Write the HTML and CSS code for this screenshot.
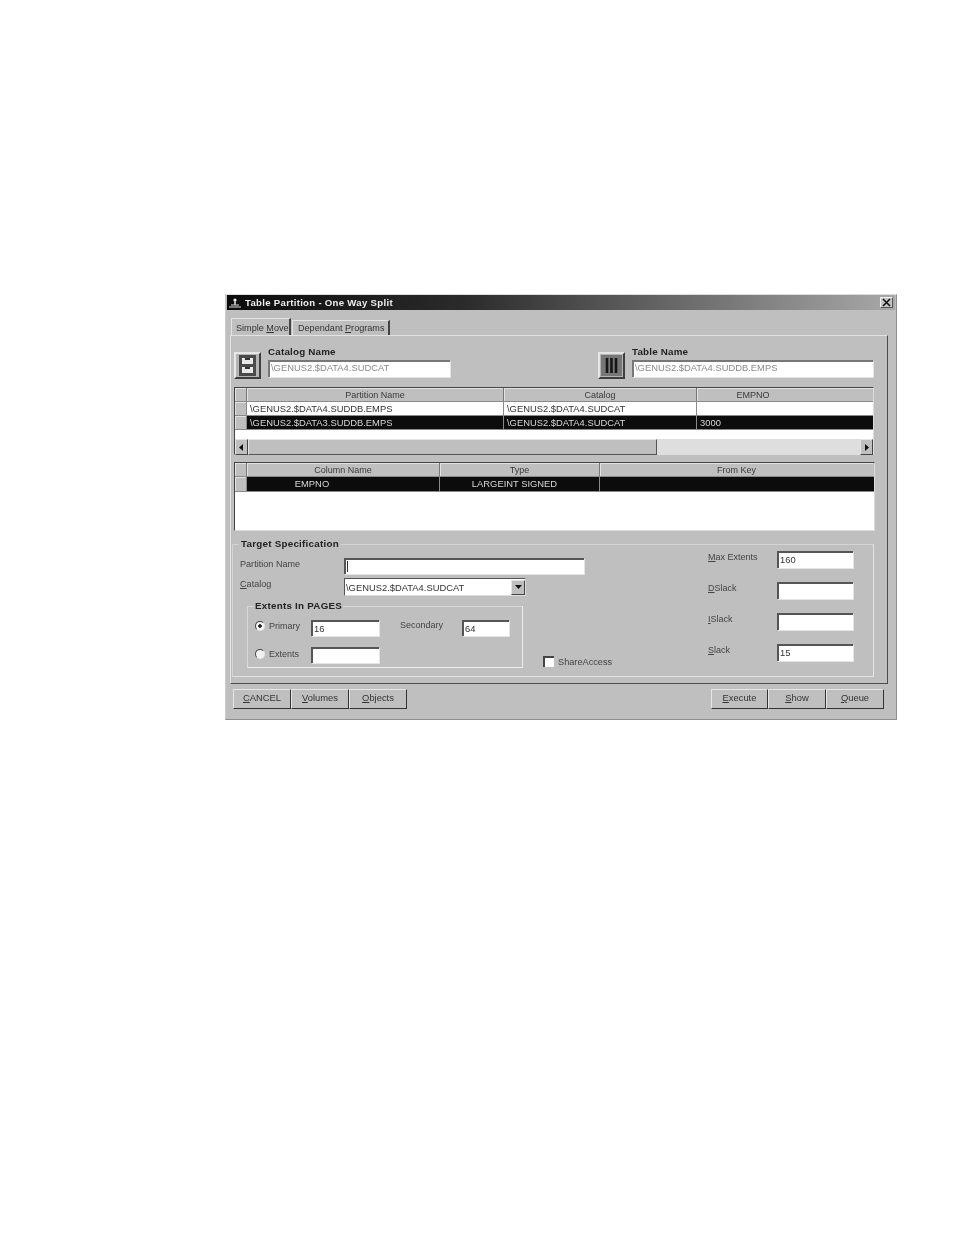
FILE: index.html
```html
<!DOCTYPE html>
<html lang="en">
<head>
<meta charset="utf-8">
<title>Table Partition - One Way Split</title>
<link rel="stylesheet" href="styles.css">
</head>
<body>
<div class="window">
  <div class="titlebar">
    <svg class="appicon" width="14" height="11" viewBox="0 0 14 11"><path d="M1 10h12M3 8h8M6 6h2M7 2v6" stroke="#ddd" stroke-width="1.2" fill="none"/><circle cx="7" cy="3" r="1.6" fill="#eee"/></svg>
    <span class="title">Table Partition - One Way Split</span>
    <span class="close"><svg width="9" height="9" viewBox="0 0 9 9"><path d="M1 1l7 7M8 1l-7 7" stroke="#111" stroke-width="1.6"/></svg></span>
  </div>
  <div class="tabs">
    <span class="tab active">Simple <u>M</u>ove</span>
    <span class="tab">Dependant <u>P</u>rograms</span>
  </div>
  <div class="panel">
    <div class="names">
      <div class="name-left">
        <div class="iconbtn">
          <svg width="19" height="23" viewBox="0 0 19 23"><rect x="1" y="1" width="17" height="21" fill="#4a4a4a"/><rect x="4" y="4" width="11" height="6" fill="#e8e8e8"/><rect x="4" y="13" width="11" height="6" fill="#e8e8e8"/><rect x="7" y="4" width="5" height="2" fill="#333"/><rect x="7" y="13" width="5" height="2" fill="#333"/></svg>
        </div>
        <div class="namefield wide-a">
          <div class="boldlabel">Catalog Name</div>
          <div class="input ro">\GENUS2.$DATA4.SUDCAT</div>
        </div>
      </div>
      <div class="name-right">
        <div class="iconbtn">
          <svg width="21" height="21" viewBox="0 0 21 21"><rect width="21" height="21" fill="#777"/><path d="M6 3v15M10.500 3v15M15 3v15" stroke="#161616" stroke-width="2.6"/></svg>
        </div>
        <div class="namefield wide-b">
          <div class="boldlabel">Table Name</div>
          <div class="input ro">\GENUS2.$DATA4.SUDDB.EMPS</div>
        </div>
      </div>
    </div>

    <div class="grid grid-one">
      <div class="row cols-one head">
        <span class="ind"></span><span class="c">Partition Name</span><span class="c">Catalog</span><span class="c offset-key">EMPNO</span>
      </div>
      <div class="row cols-one plain">
        <span class="ind"></span><span class="l">\GENUS2.$DATA4.SUDDB.EMPS</span><span class="l">\GENUS2.$DATA4.SUDCAT</span><span class="l"></span>
      </div>
      <div class="row cols-one sel">
        <span class="ind"></span><span class="l">\GENUS2.$DATA3.SUDDB.EMPS</span><span class="l">\GENUS2.$DATA4.SUDCAT</span><span class="l">3000</span>
      </div>
      <div class="blank-one"></div>
      <div class="scrollbar">
        <span class="arrow"><svg width="5" height="7" viewBox="0 0 5 7"><path d="M4 0v7L0 3.500z" fill="#111"/></svg></span>
        <span class="thumb"></span>
        <span class="track"></span>
        <span class="arrow"><svg width="5" height="7" viewBox="0 0 5 7"><path d="M1 0v7l4-3.500z" fill="#111"/></svg></span>
      </div>
    </div>

    <div class="grid grid-two">
      <div class="row cols-two head">
        <span class="ind"></span><span class="c">Column Name</span><span class="c">Type</span><span class="c">From Key</span>
      </div>
      <div class="row cols-two sel tall">
        <span class="ind"></span><span class="c offset-name">EMPNO</span><span class="c offset-type">LARGEINT SIGNED</span><span class="c"></span>
      </div>
    </div>

    <fieldset class="target">
      <legend>Target Specification</legend>
      <div class="target-body">
        <div class="target-left">
          <div class="field-row first">
            <label class="flabel">Partition Name</label>
            <div class="input partition"><i class="caret"></i></div>
          </div>
          <div class="field-row second">
            <label class="flabel"><u>C</u>atalog</label>
            <div class="select">
              <span class="select-text">\GENUS2.$DATA4.SUDCAT</span>
              <span class="drop"><svg width="7" height="4" viewBox="0 0 7 4"><path d="M0 0h7L3.500 4z" fill="#111"/></svg></span>
            </div>
          </div>
          <div class="ext-wrap">
            <fieldset class="extents">
              <legend>Extents In PAGES</legend>
              <div class="ext-row one">
                <span class="radio on"></span><span class="rlabel">Primary</span>
                <div class="input ext">16</div>
                <span class="seclabel">Secondary</span>
                <div class="input sec">64</div>
              </div>
              <div class="ext-row two">
                <span class="radio"></span><span class="rlabel">Extents</span>
                <div class="input ext"></div>
              </div>
            </fieldset>
            <div class="share"><span class="check"></span><span>ShareAccess</span></div>
          </div>
        </div>
        <div class="target-right">
          <div class="rrow"><label><u>M</u>ax Extents</label><div class="input rinput">160</div></div>
          <div class="rrow"><label><u>D</u>Slack</label><div class="input rinput"></div></div>
          <div class="rrow"><label><u>I</u>Slack</label><div class="input rinput"></div></div>
          <div class="rrow"><label><u>S</u>lack</label><div class="input rinput">15</div></div>
        </div>
      </div>
    </fieldset>
  </div>
  <div class="footer">
    <div class="btns">
      <span class="btn"><u>C</u>ANCEL</span><span class="btn"><u>V</u>olumes</span><span class="btn"><u>O</u>bjects</span>
    </div>
    <div class="btns">
      <span class="btn first-right"><u>E</u>xecute</span><span class="btn"><u>S</u>how</span><span class="btn"><u>Q</u>ueue</span>
    </div>
  </div>
</div>
</body>
</html>
```
FILE: styles.css
```css
* { box-sizing: border-box; }
html, body { margin: 0; background: #fff; }
body { padding: 294px 0 0 225px; height: 1235px; overflow: hidden; font-family: "Liberation Sans", Arial, sans-serif; font-size: 9.4px; color: #2a2a2a; }

.window { width: 672px; height: 426px; background: #bfbfbf; border: 1px solid #8e8e8e; border-top-color: #ddd; border-left-color: #ccc; display: flex; flex-direction: column; filter: blur(0.75px); }

.titlebar { height: 15px; margin: 0 1px; background: linear-gradient(90deg, #0c0c0c 0%, #2a2a2a 35%, #6e6e6e 70%, #a8a8a8 100%); display: flex; align-items: center; padding: 0 2px 0 1px; color: #eee; flex: none; }
.appicon { flex: none; margin-right: 3px; }
.title { font-weight: bold; font-size: 9.6px; letter-spacing: 0.3px; flex: 1; }
.close { width: 13px; height: 11px; background: #c4c4c4; border: 1px solid; border-color: #eee #555 #555 #eee; display: flex; align-items: center; justify-content: center; }

.tabs { height: 17px; margin: 8px 0 0 5px; display: flex; align-items: flex-end; flex: none; gap: 1px; }
.tab { height: 17px; padding: 4px 0 0 4px; border-right: 2px solid #444; border-top: 1px solid #e4e4e4; border-left: 1px solid #e4e4e4; white-space: nowrap; font-size: 9.1px; color: #333; }
.tab.active { width: 60px; }
.tab:not(.active) { width: 98px; height: 15px; padding-top: 2px; padding-left: 5px; }

.panel { width: 658px; height: 349px; margin-left: 4px; border: 1px solid; border-color: #e2e2e2 #4c4c4c #4c4c4c #e2e2e2; padding: 15px 0 0 3px; flex: none; }

.names { display: flex; height: 25px; }
.name-left { display: flex; width: 364px; }
.name-right { display: flex; }
.iconbtn { width: 27px; height: 27px; margin-top: 1px; background: #b4b4b4; border: 2px solid; border-color: #e6e6e6 #3e3e3e #3e3e3e #e6e6e6; display: flex; align-items: center; justify-content: center; flex: none; }
.namefield { margin-left: 7px; margin-top: -4px; }
.wide-a { width: 182px; }
.wide-b { width: 241px; }
.boldlabel { font-weight: bold; font-size: 9.8px; height: 13px; line-height: 10px; color: #222; letter-spacing: 0.2px; }
.input { background: #fff; border-top: 2px solid #555; border-left: 2px solid #555; height: 16px; padding-left: 1px; line-height: 14px; white-space: nowrap; color: #333; box-shadow: 1px 1px 0 #e4e4e4; }
.input.ro { height: 17px; line-height: 12px; color: #8b8b8b; border-color: #777; }

.grid { background: #fff; border: 1px solid; border-color: #444 #ddd #ddd #444; }
.grid-one { width: 640px; height: 68px; margin-top: 11px; }
.grid-two { width: 641px; height: 69px; margin-top: 7px; }
.row { display: grid; height: 14px; line-height: 13px; border-bottom: 1px solid #8a8a8a; }
.cols-one { grid-template-columns: 12px 257px 193px 176px; }
.cols-two { grid-template-columns: 12px 193px 160px 273px; }
.row > span { border-right: 1px solid #8a8a8a; overflow: hidden; white-space: nowrap; }
.row > span:last-child { border-right: 0; }
.ind { background: #bfbfbf; box-shadow: inset 1px 1px 0 #e2e2e2; }
.head { background: #bfbfbf; color: #3a3a3a; font-size: 9px; line-height: 15px; }
.head > span { border-right-color: #777; box-shadow: inset 1px 1px 0 #e2e2e2; }
.c { text-align: center; }
.l { padding-left: 3px; }
.offset-key { padding-right: 64px; }
.offset-name { padding-right: 62px; }
.offset-type { padding-right: 10px; }
.plain { background: #fff; color: #333; }
.sel { background: #0c0c0c; color: #d8d8d8; }
.tall { height: 15px; }
.blank-one { height: 9px; }
.scrollbar { height: 17px; display: flex; background: #bfbfbf; }
.arrow { width: 13px; height: 16px; background: #bfbfbf; border: 1px solid; border-color: #e4e4e4 #444 #444 #e4e4e4; display: flex; align-items: center; justify-content: center; flex: none; }
.thumb { width: 409px; background: #bfbfbf; border: 1px solid; border-color: #e4e4e4 #555 #555 #e4e4e4; height: 16px; flex: none; }
.track { flex: 1; height: 16px; background: #dedede; }

.target { width: 642px; height: 138px; margin: 8px 0 0 -2px; padding: 0; border: 1px solid; border-color: #d4d4d4 #e4e4e4 #e4e4e4 #d4d4d4; min-width: 0; }
.target > legend { margin-left: 6px; padding: 0 2px; font-weight: bold; font-size: 9.8px; line-height: 10px; color: #222; letter-spacing: 0.25px; }
.target-body { display: flex; height: 126px; }
.target-left { width: 473px; flex: none; }
.target-right { margin-left: 2px; padding-top: 2px; display: flex; flex-direction: column; }
.field-row { display: flex; align-items: flex-start; padding-left: 7px; }
.field-row.first { margin-top: 9px; height: 20px; }
.field-row.second { height: 24px; }
.flabel { width: 104px; flex: none; color: #444; margin-top: 1px; font-size: 9.1px; }
.input.partition { width: 240px; height: 16px; }
.caret { display: block; width: 1px; height: 11px; background: #333; margin-top: 1px; }
.select { width: 182px; height: 18px; background: #fff; border: 1px solid; border-color: #555 #ddd #ddd #555; display: flex; align-items: center; justify-content: space-between; }
.select-text { padding-left: 1px; color: #333; }
.drop { width: 14px; height: 15px; background: #bfbfbf; border: 1px solid; border-color: #e4e4e4 #444 #444 #e4e4e4; display: flex; align-items: center; justify-content: center; }

.ext-wrap { display: flex; margin: -1px 0 0 14px; }
.extents { width: 276px; height: 67px; margin: 0; padding: 0; border: 1px solid; border-color: #d8d8d8 #ececec #ececec #d8d8d8; flex: none; min-width: 0; }
.extents > legend { margin-left: 6px; padding: 0 1px; font-weight: bold; font-size: 9.8px; line-height: 10px; color: #222; letter-spacing: 0.25px; }
.ext-row { display: flex; align-items: center; height: 16px; padding-left: 7px; }
.ext-row.one { margin-top: 9px; }
.ext-row.two { margin-top: 11px; }
.radio { width: 10px; height: 10px; border-radius: 50%; background: #f2f2f2; border: 1px solid; border-color: #444 #e8e8e8 #e8e8e8 #444; flex: none; }
.radio.on { background: radial-gradient(circle, #222 0 1.5px, #f2f2f2 2px); }
.rlabel { margin-left: 4px; width: 42px; color: #444; flex: none; font-size: 9px; }
.one .radio, .one .rlabel { margin-top: -4px; }
.two .radio, .two .rlabel { margin-top: -2px; }
.input.ext { width: 68px; flex: none; }
.seclabel { margin-left: 21px; width: 62px; color: #444; flex: none; margin-top: -6px; font-size: 9px; }
.input.sec { width: 47px; flex: none; }
.share { display: flex; align-items: flex-end; margin: 0 0 0 20px; height: 67px; color: #444; gap: 4px; padding-bottom: 1px; font-size: 9.2px; }
.check { width: 11px; height: 11px; background: #fff; border-top: 2px solid #444; border-left: 2px solid #444; flex: none; }

.rrow { display: flex; align-items: flex-start; height: 32px; width: 152px; }
.rrow label { width: 69px; color: #444; flex: none; font-size: 9px; margin-top: 1px; }
.rinput { width: 76px; height: 17px; line-height: 13px; }

.footer { display: flex; justify-content: space-between; padding: 5px 12px 0 7px; }
.btns { display: flex; }
.btn { width: 58px; height: 20px; background: #bfbfbf; border: 1px solid; border-color: #e6e6e6 #333 #333 #e6e6e6; text-align: center; line-height: 16px; color: #333; font-size: 9.4px; }
.first-right { width: 57px; }
```
